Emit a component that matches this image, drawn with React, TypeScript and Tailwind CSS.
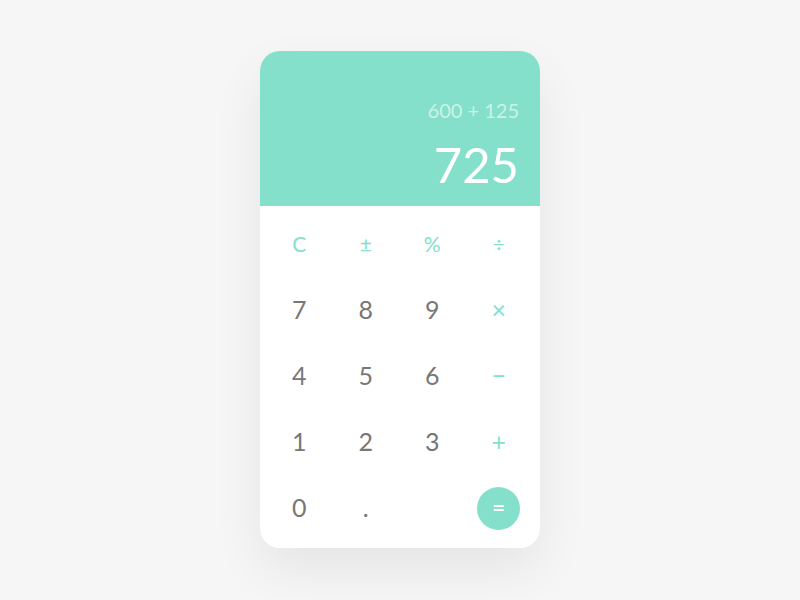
import { ReactNode } from "react";

type Key = { label: ReactNode; tone: "op" | "op2" | "num" | "eq" | "none" };

const keys: Key[] = [
  { label: "C", tone: "op" },
  { label: "±", tone: "op" },
  { label: "%", tone: "op" },
  { label: "÷", tone: "op" },
  { label: "7", tone: "num" },
  { label: "8", tone: "num" },
  { label: "9", tone: "num" },
  { label: "×", tone: "op2" },
  { label: "4", tone: "num" },
  { label: "5", tone: "num" },
  { label: "6", tone: "num" },
  { label: "−", tone: "op2" },
  { label: "1", tone: "num" },
  { label: "2", tone: "num" },
  { label: "3", tone: "num" },
  { label: "+", tone: "op2" },
  { label: "0", tone: "num" },
  { label: ".", tone: "num" },
  { label: "", tone: "none" },
  { label: "=", tone: "eq" },
];

const toneClass = {
  op: "text-[21px] text-[#84e0ca]",
  op2: "text-[25px] text-[#84e0ca]",
  num: "text-[25px] text-[#777777]",
  none: "",
};

function CalcKey({ k }: { k: Key }) {
  if (k.tone === "eq") {
    return (
      <div className="flex h-[66px] items-center justify-center">
        <span className="flex h-[43px] w-[43px] items-center justify-center rounded-full bg-[#84e0ca] text-[22px] font-bold leading-none text-white">
          =
        </span>
      </div>
    );
  }
  return (
    <div className={`flex h-[66px] items-center justify-center ${toneClass[k.tone]}`}>
      {k.label}
    </div>
  );
}

export default function App() {
  return (
    <div className="flex h-[600px] w-full items-start justify-center bg-[#f6f6f6] pt-[51px] font-['Lato','Open_Sans',sans-serif]">
      <div className="w-[280px] overflow-hidden rounded-[20px] bg-white shadow-[0_22px_50px_rgba(0,0,0,0.07)]">
        <div className="flex h-[155px] flex-col items-end justify-end bg-[#84e0ca] px-[21px] pb-[17px]">
          <div className="text-[20px] leading-none text-white/60">600 + 125</div>
          <div className="mt-[20px] text-[49px] leading-none text-white">725</div>
        </div>
        <div className="grid grid-cols-4 pb-[7px] pl-[6px] pr-[8px] pt-[5px]">
          {keys.map((k, i) => (
            <CalcKey key={i} k={k} />
          ))}
        </div>
      </div>
    </div>
  );
}
